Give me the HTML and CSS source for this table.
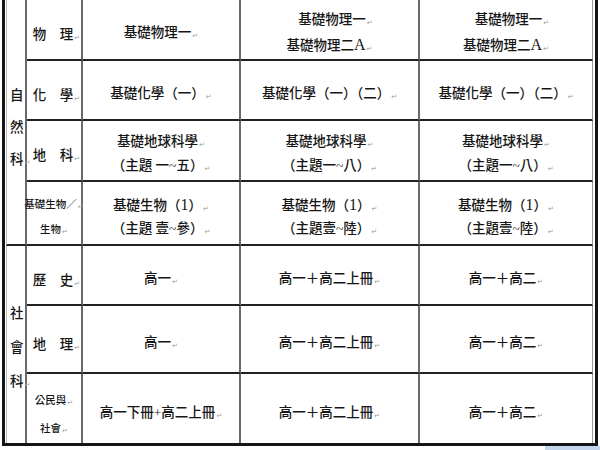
FILE: index.html
```html
<!DOCTYPE html>
<html lang="zh-Hant">
<head>
<meta charset="utf-8">
<title>課程範圍表</title>
<link rel="stylesheet" href="styles.css">
</head>
<body>
<div class="sheet">
  <div class="grid">
    <div class="group g-nat"><p>自</p><p>然</p><p>科<i class="pm">↵</i></p></div>

    <div class="subj"><p>物　理<i class="pm">↵</i></p></div>
    <div class="cell"><p>基礎物理一<i class="pm">↵</i></p></div>
    <div class="cell"><p class="ind">基礎物理一<i class="pm">↵</i></p><p>基礎物理二<span class="lat">A</span><i class="pm">↵</i></p></div>
    <div class="cell last"><p class="ind">基礎物理一<i class="pm">↵</i></p><p>基礎物理二<span class="lat">A</span><i class="pm">↵</i></p></div>

    <div class="subj"><p>化　學<i class="pm">↵</i></p></div>
    <div class="cell"><p>基礎化學（一）<i class="pm">↵</i></p></div>
    <div class="cell"><p>基礎化學（一）（二）<i class="pm">↵</i></p></div>
    <div class="cell last"><p>基礎化學（一）（二）<i class="pm">↵</i></p></div>

    <div class="subj"><p>地　科<i class="pm">↵</i></p></div>
    <div class="cell tight"><p>基礎地球科學<i class="pm">↵</i></p><p>（主題 一~五）<i class="pm">↵</i></p></div>
    <div class="cell tight"><p>基礎地球科學<i class="pm">↵</i></p><p>（主題一~八）<i class="pm">↵</i></p></div>
    <div class="cell tight last"><p>基礎地球科學<i class="pm">↵</i></p><p>（主題一~八）<i class="pm">↵</i></p></div>

    <div class="subj small bio"><p>基礎生物／<i class="pm">↵</i></p><p>生物<i class="pm">↵</i></p></div>
    <div class="cell tighter"><p>基礎生物（<span class="lat">1</span>）<i class="pm">↵</i></p><p>（主題 壹~參）<i class="pm">↵</i></p></div>
    <div class="cell tighter"><p>基礎生物（<span class="lat">1</span>）<i class="pm">↵</i></p><p>（主題壹~陸）<i class="pm">↵</i></p></div>
    <div class="cell tighter last"><p>基礎生物（<span class="lat">1</span>）<i class="pm">↵</i></p><p>（主題壹~陸）<i class="pm">↵</i></p></div>

    <div class="group g-soc"><p>社</p><p>會</p><p>科<i class="pm">↵</i></p></div>

    <div class="subj"><p>歷　史<i class="pm">↵</i></p></div>
    <div class="cell"><p>高一<i class="pm">↵</i></p></div>
    <div class="cell"><p>高一＋高二上冊<i class="pm">↵</i></p></div>
    <div class="cell last"><p>高一＋高二<i class="pm">↵</i></p></div>

    <div class="subj"><p>地　理<i class="pm">↵</i></p></div>
    <div class="cell"><p>高一<i class="pm">↵</i></p></div>
    <div class="cell"><p>高一＋高二上冊<i class="pm">↵</i></p></div>
    <div class="cell last"><p>高一＋高二<i class="pm">↵</i></p></div>

    <div class="subj small civ bottom"><p>公民與<i class="pm">↵</i></p><p>社會<i class="pm">↵</i></p></div>
    <div class="cell bottom"><p>高一下冊+高二上冊<i class="pm">↵</i></p></div>
    <div class="cell bottom"><p>高一＋高二上冊<i class="pm">↵</i></p></div>
    <div class="cell bottom last"><p>高一＋高二<i class="pm">↵</i></p></div>
  </div>
  <div class="foot"><span class="tab"></span></div>
</div>
</body>
</html>
```

FILE: styles.css
```css
html, body {
  margin: 0;
  padding: 0;
  background: #ffffff;
  overflow: hidden;
}

body {
  width: 600px;
  height: 450px;
  font-family: "Liberation Serif", "Noto Sans CJK TC", serif;
  color: #161616;
}

.sheet {
  width: 600px;
  height: 450px;
}

.grid {
  margin-left: 2px;
  width: 596px;
  box-sizing: border-box;
  border-left: 3px solid #151515;
  border-right: 3px solid #151515;
  border-bottom: 3px solid #151515;
  padding-left: 1px;
  padding-right: 2px;
  display: grid;
  grid-template-columns: 21px 56px 158px 179px 173px;
  grid-template-rows: 61px 60px 61px 64px 60px 68px 69px;
}

.grid > div {
  box-sizing: border-box;
  border-right: 2px solid #6a6a6a;
  border-bottom: 2px solid #222222;
  min-width: 0;
}

.grid > .bottom {
  border-bottom: none;
}

.grid > .last {
  border-right: 1px solid #9a9a9a;
}

p {
  margin: 0;
  white-space: nowrap;
}

.lat {
  font-family: "Liberation Serif", serif;
  font-size: 16px;
  line-height: 0;
}

.pm {
  font-style: normal;
  font-family: "DejaVu Sans", sans-serif;
  font-size: 7px;
  line-height: 0;
  color: #9c9c9c;
  margin-left: 1px;
  vertical-align: -1px;
}

.group {
  border-left: 1px solid #bdbdbd;
  display: flex;
  flex-direction: column;
  justify-content: center;
  padding-left: 3px;
  font-size: 13.5px;
  font-weight: 500;
}

.g-nat {
  grid-row: 1 / span 4;
  line-height: 32px;
  padding-top: 12px;
}

.g-soc {
  grid-row: 5 / span 3;
  border-bottom: none !important;
  line-height: 34px;
  padding-top: 6px;
}

.subj {
  display: flex;
  flex-direction: column;
  justify-content: center;
  align-items: center;
  font-size: 13.5px;
  font-weight: 500;
  padding-left: 5px;
  padding-top: 7px;
}

.subj.small {
  font-size: 10.5px;
  line-height: 25px;
  padding-left: 0;
}

.subj.bio {
  padding-top: 7px;
}

.subj.civ {
  line-height: 28px;
  padding-top: 12px;
}

.cell {
  display: flex;
  flex-direction: column;
  justify-content: center;
  align-items: center;
  text-align: center;
  font-size: 13.5px;
  font-weight: 500;
  line-height: 26px;
  padding-top: 7px;
}

.cell.bottom {
  padding-top: 9px;
}

.cell.tight {
  line-height: 24px;
}

.cell.tighter {
  line-height: 23px;
}

.ind {
  padding-left: 12px;
}

.foot {
  display: flex;
  justify-content: flex-end;
  height: 4px;
}

.tab {
  width: 55px;
  height: 4px;
  background: #c2d6ee;
}
```
